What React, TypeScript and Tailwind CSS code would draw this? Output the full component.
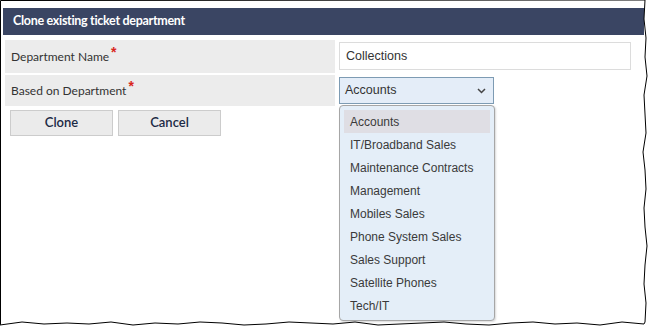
import React from "react";

const departments = [
  "Accounts",
  "IT/Broadband Sales",
  "Maintenance Contracts",
  "Management",
  "Mobiles Sales",
  "Phone System Sales",
  "Sales Support",
  "Satellite Phones",
  "Tech/IT",
];

// jagged torn-paper edge, right and bottom
function tornEdge() {
  const right: string[] = [];
  const rx = [645, 644, 646, 645, 647, 644, 645, 646, 643, 645, 646, 644, 645, 647, 645, 644, 646, 645];
  for (let i = 0; i < rx.length; i++) {
    const y = Math.round((i * 322) / (rx.length - 1));
    right.push(`${rx[i]},${y}`);
  }
  const bottom: string[] = [];
  const by = [324, 322, 325, 323, 324, 322, 323, 325, 324, 322, 323, 324, 325, 322, 324, 323, 322, 324, 325, 323, 322, 324, 323, 325, 322, 324, 323, 324, 322, 325];
  for (let i = 0; i < by.length; i++) {
    const x = Math.round(644 - (i * 644) / (by.length - 1));
    bottom.push(`${x},${by[i]}`);
  }
  return ["0.5,0.5", ...right, ...bottom, "0.5,324", "0.5,0.5"].join(" ");
}

const arial = { fontFamily: "'Liberation Sans', Arial, sans-serif" };

function Star() {
  return (
    <span className="relative -top-[5px] ml-[2px] text-[14px] font-bold leading-none text-[#d9261c]" style={arial}>
      *
    </span>
  );
}

export default function App() {
  return (
    <div className="relative w-[650px] h-[329px] bg-white overflow-hidden" style={{ fontFamily: "Lato, 'Liberation Sans', sans-serif" }}>
      <div className="pt-[8px] pl-[3px]">
        <div className="w-[641px] h-[27px] bg-[#3a4563] flex items-center pl-[10px] text-white font-bold text-[12.5px] tracking-[-0.3px]">
          Clone existing ticket department
        </div>

        <div className="mt-[5px] pl-[2px] flex flex-col gap-[2px]">
          <div className="flex h-[33px]">
            <div className="w-[330px] bg-[#ececec] flex items-center pl-[6px] text-[12px] text-[#333]">
              Department Name<Star />
            </div>
            <div className="pl-[4px] pt-[2px]">
              <div className="w-[292px] h-[28px] border border-[#dcdcdc] bg-white flex items-center pl-[6px] text-[12.5px] text-[#333]" style={arial}>
                Collections
              </div>
            </div>
          </div>

          <div className="flex h-[31px]">
            <div className="w-[330px] bg-[#ececec] flex items-center pl-[6px] text-[12px] text-[#333]">
              Based on Department<Star />
            </div>
            <div className="pl-[4px] pt-[2px]">
              <div className="w-[155px] h-[27px] border border-[#7d9bb3] bg-[#e4edf8] flex items-center justify-between pl-[5px] pr-[7px] text-[12.5px] text-[#333]" style={arial}>
                Accounts
                <svg width="9" height="6" viewBox="0 0 9 6">
                  <polyline points="1,1 4.5,4.5 8,1" fill="none" stroke="#444" strokeWidth="1.5" />
                </svg>
              </div>
            </div>
          </div>

          <div className="flex gap-[5px] mt-[2px] pl-[5px]">
            <button className="w-[103px] h-[26px] bg-[#ebebeb] border border-[#cccccc] text-[13px] font-semibold text-[#1c2a45]">
              Clone
            </button>
            <button className="w-[103px] h-[26px] bg-[#ebebeb] border border-[#cccccc] text-[13px] font-semibold text-[#1c2a45]">
              Cancel
            </button>
          </div>
        </div>
      </div>

      <div className="absolute left-[339px] top-[105px] w-[156px] h-[216px] rounded-[4px] border border-[#a6a6a6] bg-[#e4eef8] px-[4px] pt-[4px] shadow-[1px_1px_2px_rgba(0,0,0,0.15)]" style={arial}>
        {departments.map((d, i) => (
          <div key={d} className={`h-[23px] flex items-center pl-[6px] text-[12px] text-[#3a3a3a] ${i === 0 ? "bg-[#dfdee4]" : ""}`}>
            {d}
          </div>
        ))}
      </div>

      <svg className="absolute left-0 top-0 pointer-events-none" width="650" height="329">
        <polyline points={tornEdge()} fill="none" stroke="#000" strokeWidth="1" />
      </svg>
    </div>
  );
}
